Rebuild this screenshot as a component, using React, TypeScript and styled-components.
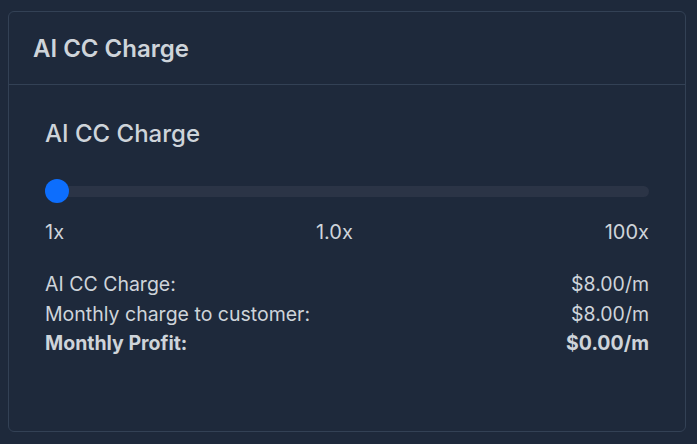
import React, { useState } from 'react'
import styled, { createGlobalStyle } from 'styled-components'

const GlobalStyle = createGlobalStyle`
  html, body {
    margin: 0;
    padding: 0;
    background: #1e293b;
  }
  body {
    padding: 11px 11px 12px 8px;
    font-family: Inter, 'Noto Sans', sans-serif;
    color: #ced4da;
  }
`

const Card = styled.div`
  width: 678px;
  height: 421px;
  box-sizing: border-box;
  border: 1px solid #334155;
  border-radius: 6px;
  background: #1e293b;
  display: flex;
  flex-direction: column;
`

const CardHeader = styled.div`
  height: 73px;
  box-sizing: border-box;
  padding: 0 24px;
  display: flex;
  align-items: center;
  border-bottom: 1px solid #334155;
  font-size: 24px;
  font-weight: 600;
`

const CardBody = styled.div`
  padding: 34px 36px 0 36px;
  display: flex;
  flex-direction: column;
`

const Title = styled.div`
  font-size: 24px;
  line-height: 29px;
  font-weight: 500;
`

const SliderWrap = styled.div`
  position: relative;
  height: 24px;
  margin-top: 31px;
  display: flex;
  align-items: center;
`

const Track = styled.div`
  width: 100%;
  height: 11px;
  border-radius: 6px;
  background: #2b3446;
`

const Thumb = styled.div`
  position: absolute;
  top: 0;
  width: 24px;
  height: 24px;
  border-radius: 50%;
  background: #0d6efd;
`

const Scale = styled.div`
  display: flex;
  justify-content: space-between;
  margin-top: 17px;
  font-size: 20px;
  line-height: 24px;
`

const Stats = styled.div`
  margin-top: 26px;
  display: flex;
  flex-direction: column;
`

const Row = styled.div<{ $bold?: boolean }>`
  display: flex;
  justify-content: space-between;
  font-size: 19.5px;
  line-height: 29.5px;
  font-weight: ${p => (p.$bold ? 700 : 400)};
`

export default function App() {
  const [mult] = useState(1)
  const thumbLeft = ((mult - 1) / 99) * 100

  return (
    <>
      <GlobalStyle />
      <Card>
        <CardHeader>AI CC Charge</CardHeader>
        <CardBody>
          <Title>AI CC Charge</Title>
          <SliderWrap>
            <Track />
            <Thumb style={{ left: `${thumbLeft}%` }} />
          </SliderWrap>
          <Scale>
            <span>1x</span>
            <span>1.0x</span>
            <span>100x</span>
          </Scale>
          <Stats>
            <Row>
              <span>AI CC Charge:</span>
              <span>$8.00/m</span>
            </Row>
            <Row>
              <span>Monthly charge to customer:</span>
              <span>$8.00/m</span>
            </Row>
            <Row $bold>
              <span>Monthly Profit:</span>
              <span>$0.00/m</span>
            </Row>
          </Stats>
        </CardBody>
      </Card>
    </>
  )
}
